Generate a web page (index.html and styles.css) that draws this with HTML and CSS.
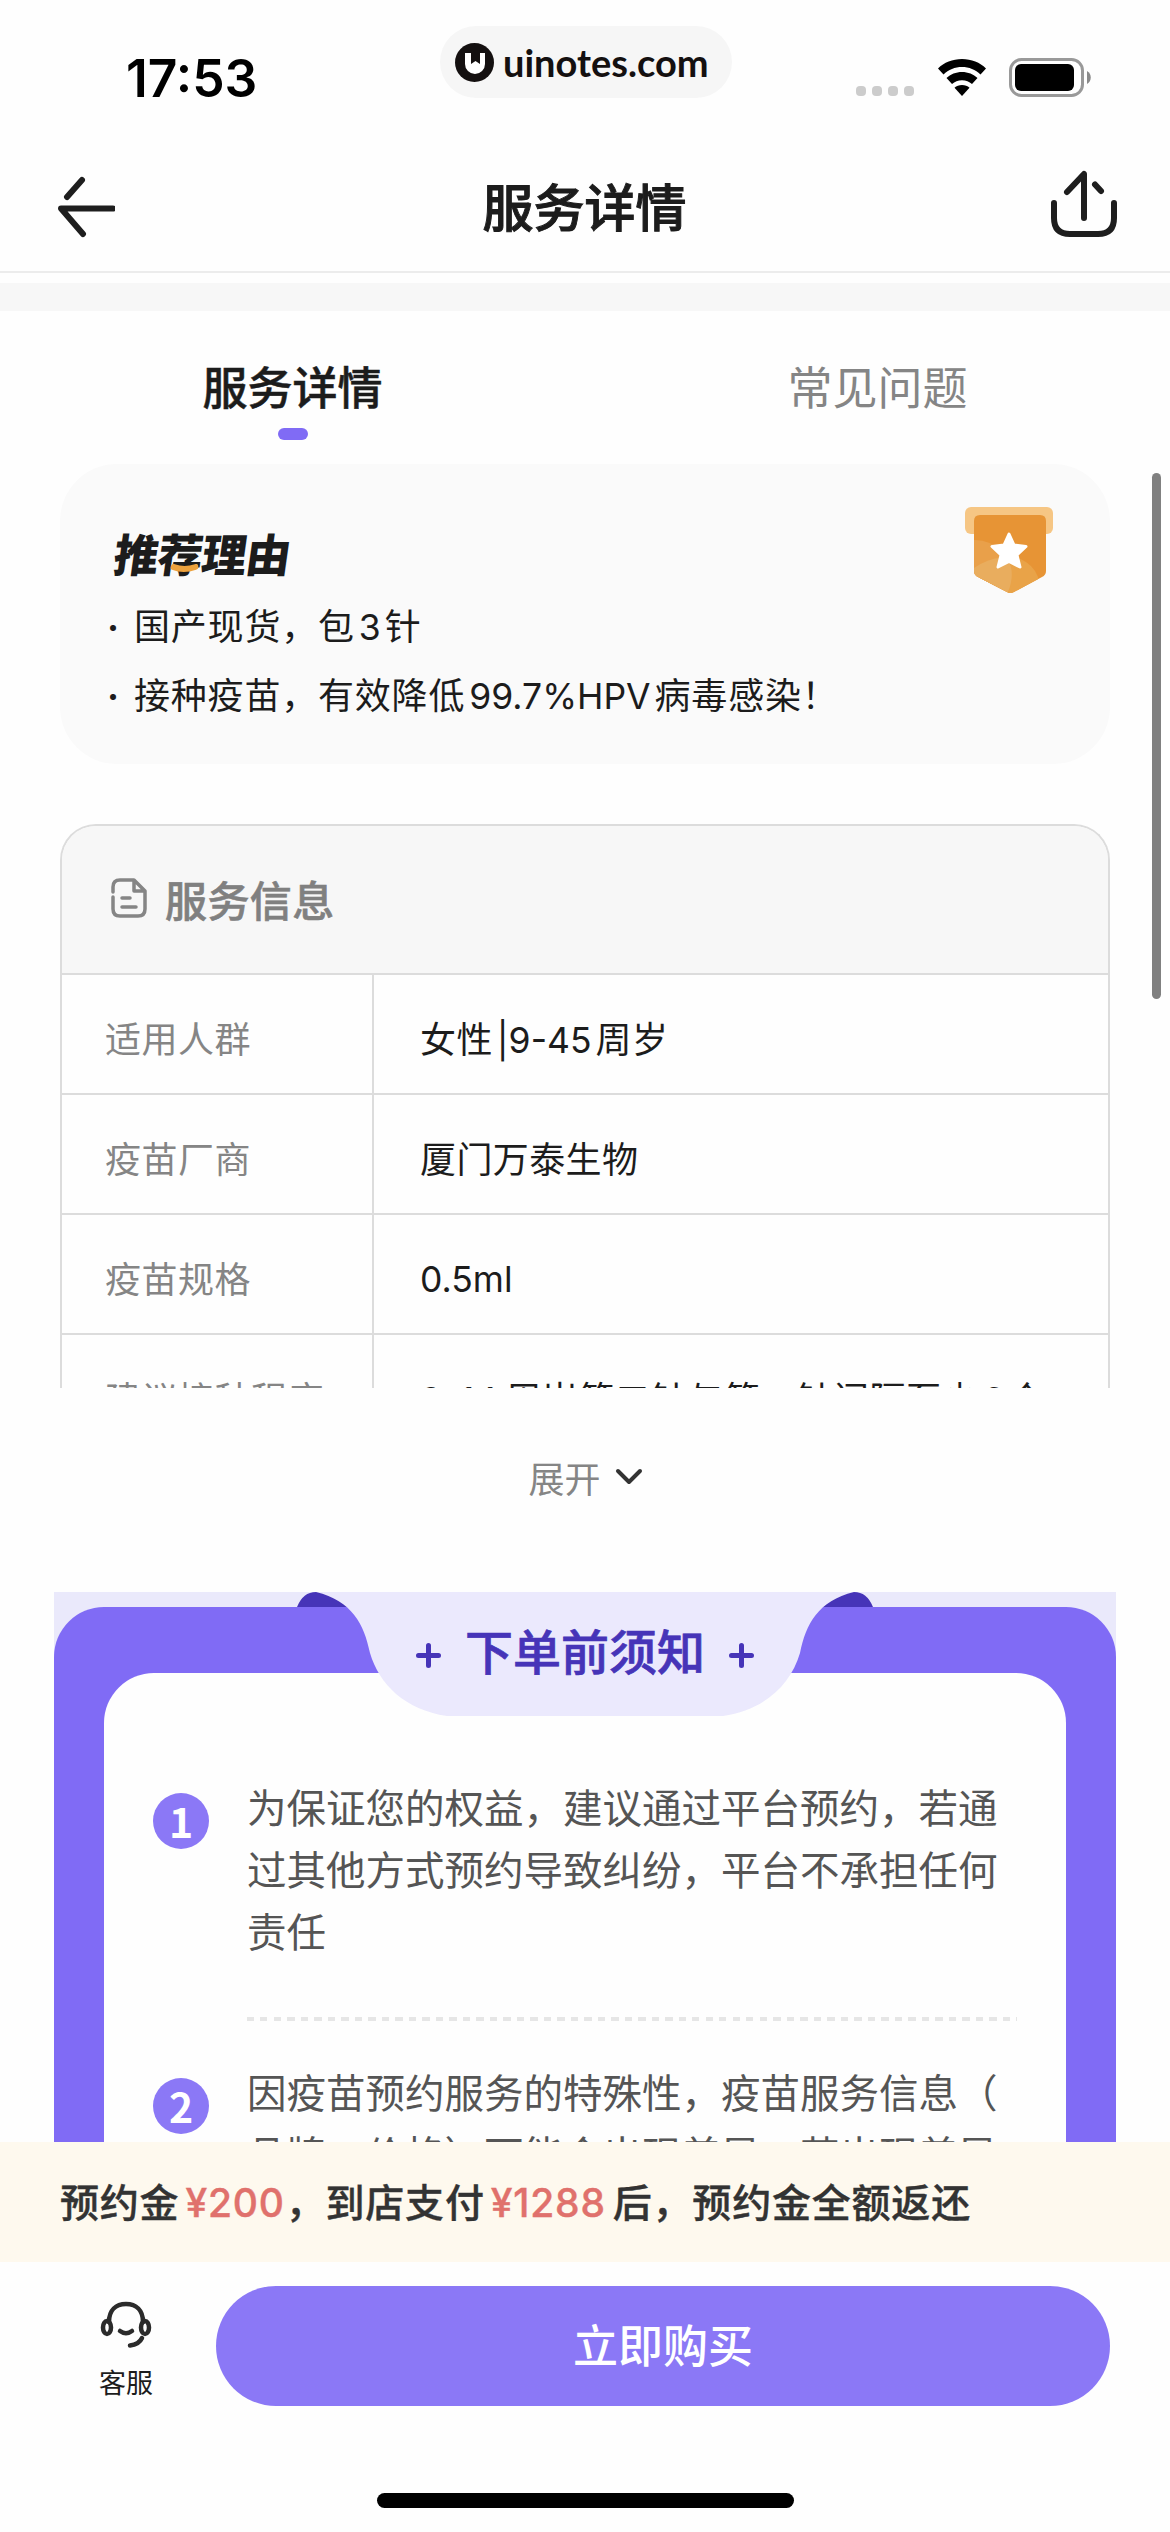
FILE: index.html
```
<!DOCTYPE html>
<html lang="zh-CN">
<head>
    <meta charset="UTF-8">
    <title>服务详情</title>
    <link rel="stylesheet" href="styles.css">
</head>

<body>
<div class="statusbar">
    <span class="time">17:53</span>
    <div class="island">
        <svg width="39" height="39" viewBox="0 0 39 39"><circle cx="19.5" cy="19.5" r="19.5" fill="#141010"/><path d="M10 10h6v11l4.500-3 4.500 3V10h5v11a10 10 0 0 1-20 0z" fill="#fff"/></svg>
        <span>uinotes.com</span>
    </div>
    <div class="signals">
        <div class="dots"><i></i><i></i><i></i><i></i></div>
        <svg class="wifi" width="50" height="38" viewBox="0 0 50 38"><path d="M25 1C15.500 1 7 4.500 1 10.500l5.500 6C11.500 11.500 18 9 25 9s13.500 2.500 18.500 7.500l5.500-6C43 4.500 34.500 1 25 1z"/><path d="M25 14c-6 0-11.500 2.300-15.500 6l5.500 6c2.700-2.400 6-3.800 10-3.800s7.300 1.400 10 3.800l5.500-6c-4-3.700-9.500-6-15.500-6z"/><path d="M25 27c-3 0-5.500 1-7.500 2.800L25 38l7.500-8.200C30.500 28 28 27 25 27z"/></svg>
        <svg class="battery" width="82" height="39" viewBox="0 0 82 39"><rect x="1.500" y="1.500" width="72" height="36" rx="11" fill="none" stroke="#999" stroke-width="3"/><rect x="6" y="6" width="59" height="27" rx="6"/><path d="M78 13c5 2.500 5 10.500 0 13z" fill="#8a8a8a"/></svg>
    </div>
</div>

<div class="navbar">
    <svg width="60" height="64" viewBox="0 0 60 64"><path d="M27 5L12 22M58 33.500H6L28 59" /></svg>
    <h1>服务详情</h1>
    <svg width="70" height="70" viewBox="0 0 70 70"><path d="M4 35v15q0 16 16 16h28q16 0 16-16V35M17 24L34 6v44M45 16.500l6 6.500"/></svg>
</div>
<div class="band"></div>

<main>
    <div class="tabs">
        <div class="tab active">服务详情</div>
        <div class="tab">常见问题</div>
    </div>

    <section class="reason">
        <h2>推<span class="smile">荐<svg width="28" height="9" viewBox="0 0 28 9"><path d="M3 3q11 4 22 0" fill="none" stroke="#eda23e" stroke-width="6" stroke-linecap="round"/></svg></span>理由</h2>
        <p><b>·</b>国产现货，包<i>3</i>针</p>
        <p><b>·</b>接种疫苗，有效降低<i>99.7%HPV</i>病毒感染！</p>
        <svg class="medal" width="90" height="88" viewBox="0 0 90 88">
            <rect x="1" y="1" width="88" height="27" rx="6" fill="#f6c684"/>
            <clipPath id="shield"><path d="M16 9h60q6 0 6 6v50q0 4-4 6L50 86q-3.500 2-7 0L14 71q-4-2-4-6V15q0-6 6-6z"/></clipPath>
            <g clip-path="url(#shield)">
                <rect width="90" height="88" fill="#e79435"/>
                <circle cx="11" cy="72" r="38" fill="#e9a04a"/>
                <circle cx="45" cy="82" r="31" fill="#e9a348"/>
                <path d="M10 62q20-13 34-9 8 16-1 35H10z" fill="#e9ad5e"/>
            </g>
            <path d="M45 28l5 11 12 1.500-9 8.500 3 12-11-5.500L34 61l3-12-9-8.500L40 39z" fill="#fff" stroke="#fff" stroke-width="3" stroke-linejoin="round"/>
        </svg>
    </section>

    <section class="info">
        <div class="info-head">
            <svg width="36" height="40" viewBox="0 0 36 40"><path d="M2 14V9q0-7 7-7h14l11 11v18q0 7-7 7H9q-7 0-7-7V19M23 2v11h11M11 20h8M11 29h14"/></svg>
            <span>服务信息</span>
        </div>
        <div class="row"><div class="key">适用人群</div><div class="val">女性<i>|9-45</i>周岁</div></div>
        <div class="row"><div class="key">疫苗厂商</div><div class="val">厦门万泰生物</div></div>
        <div class="row"><div class="key">疫苗规格</div><div class="val ml">0.5ml</div></div>
        <div class="row"><div class="key">建议接种程序</div><div class="val">9-14<span class="gap"></span>周岁第二针与第一针间隔至少<i>6</i>个</div></div>
    </section>
    <div class="expand">展开<svg width="28" height="18" viewBox="0 0 28 18"><path d="M3 3l11 11L25 3"/></svg></div>

    <section class="notice">
        <svg class="clip" width="576" height="124" viewBox="0 0 576 124">
            <path d="M0 15Q6 0 19 0H50V15zM576 15q-6-15-19-15H526V15z" fill="#4634b8"/>
            <path d="M19 0C55 9 67 32 73 61C82 92 108 118 150 124H426C468 118 494 92 503 61C509 32 521 9 557 0z" fill="#ebe9fd"/>
        </svg>
        <h3>
            <svg width="25" height="25" viewBox="0 0 25 25"><path d="M12.500 2.500v20M2.500 12.500h20"/></svg>
            <span>下单前须知</span>
            <svg width="25" height="25" viewBox="0 0 25 25"><path d="M12.500 2.500v20M2.500 12.500h20"/></svg>
        </h3>
        <div class="frame">
            <div class="paper">
                <div class="item">
                    <span class="num">1</span>
                    <p>为保证您的权益，建议通过平台预约，若通<br>过其他方式预约导致纠纷，平台不承担任何<br>责任</p>
                </div>
                <div class="dash"></div>
                <div class="item">
                    <span class="num">2</span>
                    <p>因疫苗预约服务的特殊性，疫苗服务信息（<br>品牌、价格）可能会出现差异，若出现差异</p>
                </div>
            </div>
        </div>
    </section>
</main>
<div class="scrollbar"></div>

<footer>
    <div class="deposit">预约金<em>¥200</em>，到店支付<em>¥1288</em>后，预约金全额返还</div>
    <div class="actions">
        <div class="service">
            <svg width="52" height="48" viewBox="0 0 52 48"><path d="M9 21C9 9 16 3 26 3s17 6 17 18M20 30q6 4.500 12 0M42 37q-3 6.500-12 7.500"/><ellipse cx="7" cy="26.500" rx="4" ry="6.500"/><ellipse cx="45" cy="26.500" rx="4" ry="6.500"/></svg>
            <span>客服</span>
        </div>
        <div class="buy">立即购买</div>
    </div>
    <div class="home"></div>
</footer>
</body>
</html>
```
FILE: styles.css
```
*{
    box-sizing: border-box;
}
body{
    margin: 0;
    width: 1170px;
    height: 2532px;
    position: relative;
    overflow: hidden;
    display: flex;
    flex-direction: column;
    background-color: #fefefe;
    color: #1c1c1c;
    font-family: Inter, "Noto Sans CJK SC", sans-serif;
}
h1, h2, h3, p{
    margin: 0;
}
i, em{
    font-style: normal;
}
svg{
    display: block;
    flex: none;
}

/* status bar */
.statusbar{
    height: 150px;
    flex: none;
    display: grid;
    grid-template-columns: 440px 292px 1fr;
    align-items: start;
    color: #000;
}
.time{
    padding: 47px 0 0 126px;
    font-size: 51.5px;
    line-height: 62px;
    font-weight: 600;
}
.island{
    height: 72px;
    margin-top: 26px;
    padding-left: 15px;
    display: flex;
    align-items: center;
    gap: 9px;
    border-radius: 36px;
    background-color: #f6f6f6;
    color: #141010;
    font: 700 38px/70px Lato, sans-serif;
}
.signals{
    display: flex;
    padding: 58px 0 0 124px;
}
.dots{
    display: flex;
    gap: 6px;
    padding-top: 28px;
    width: 81px;
}
.dots i{
    width: 10px;
    height: 10px;
    border-radius: 4px;
    background-color: #ccc;
}
.wifi{
    margin-right: 22px;
}

/* title bar */
.navbar{
    height: 123px;
    flex: none;
    padding: 0 50px 0 55px;
    display: flex;
    justify-content: space-between;
    align-items: flex-start;
    border-bottom: 2px solid #ececec;
}
.navbar svg{
    fill: none;
    stroke: #1e1e1e;
    stroke-width: 6;
    stroke-linecap: round;
    stroke-linejoin: round;
    margin-top: 25px;
}
.navbar svg:last-child{
    margin-top: 18px;
}
.navbar h1{
    font-size: 51px;
    line-height: 76px;
    font-weight: 500;
    -webkit-text-stroke: 1px;
    margin: 21px 0 0 4px;
}
.band{
    flex: none;
    height: 28px;
    margin-top: 10px;
    background-color: #f7f7f7;
}

main{
    flex: 1;
    min-height: 0;
    overflow: hidden;
}
.tabs{
    display: flex;
    height: 153px;
}
.tab{
    flex: 1;
    display: flex;
    flex-direction: column;
    align-items: center;
    padding-top: 45px;
    font-size: 45px;
    line-height: 66px;
    color: #858585;
}
.active{
    color: #1c1c1c;
    font-weight: 500;
    -webkit-text-stroke: .5px;
}
.active::after{
    content: "";
    width: 30px;
    height: 12px;
    margin-top: 6px;
    border-radius: 6px;
    background-color: #806bf5;
}

.reason{
    position: relative;
    height: 300px;
    margin: 0 60px;
    padding: 59px 46px 0;
    border-radius: 57px;
    background-color: #fafafa;
}
.reason h2{
    font-size: 45px;
    line-height: 66px;
    font-weight: 900;
    letter-spacing: -1px;
    padding-left: 8px;
    margin-bottom: 4px;
    transform: skewX(-8deg);
}
.smile{
    position: relative;
}
.smile svg{
    position: absolute;
    left: 14px;
    top: 36px;
}
.reason p{
    font-size: 36px;
    line-height: 69px;
    letter-spacing: .8px;
}
.reason p b{
    display: inline-block;
    width: 28px;
    padding-left: 1px;
}
.reason p i, .val i{
    margin: 0 4px;
    letter-spacing: 0;
    font-size: 35.5px;
}
.medal{
    position: absolute;
    right: 56px;
    top: 42px;
}

/* service table, cut off until expanded */
.info{
    height: 564px;
    margin: 60px 60px 0;
    overflow: hidden;
    border: 2px solid #dcdcdc;
    border-bottom: 0;
    border-radius: 36px 36px 0 0;
}
.info-head{
    display: flex;
    align-items: center;
    gap: 18px;
    height: 147px;
    padding: 0 0 3px 49px;
    background-color: #f7f7f7;
    color: #808080;
    font-size: 42px;
    font-weight: 500;
    letter-spacing: .4px;
    -webkit-text-stroke: .6px;
}
.info-head svg{
    fill: none;
    stroke: #858585;
    stroke-width: 3.5;
    stroke-linecap: round;
    stroke-linejoin: round;
}
.row{
    display: flex;
    height: 120px;
    border-top: 2px solid #dcdcdc;
    font-size: 36px;
    line-height: 130px;
    white-space: nowrap;
}
.key{
    width: 312px;
    padding-left: 43px;
    border-right: 2px solid #dcdcdc;
    color: #858585;
    letter-spacing: .5px;
}
.val{
    padding-left: 46px;
    letter-spacing: .4px;
}
.ml{
    font-size: 35.5px;
    letter-spacing: 0;
}
.gap{
    display: inline-block;
    width: 7px;
}
.expand{
    display: flex;
    justify-content: center;
    align-items: center;
    gap: 14px;
    height: 180px;
    padding: 0 0 3px 1px;
    color: #858585;
    font-size: 36px;
}
.expand svg{
    fill: none;
    stroke: #333;
    stroke-width: 4;
    stroke-linecap: round;
    stroke-linejoin: round;
}

/* notice board */
.notice{
    position: relative;
    margin: 24px 54px 0;
    padding-top: 15px;
    background-color: #eae9fb;
}
.clip{
    position: absolute;
    left: 243px;
    top: 0;
}
.notice h3{
    position: absolute;
    left: 0;
    right: 0;
    top: 25px;
    display: flex;
    justify-content: center;
    align-items: center;
    gap: 24px;
    font-size: 48px;
    line-height: 72px;
    font-weight: 500;
    -webkit-text-stroke: .7px;
    color: #4634b8;
}
.notice h3 svg{
    fill: none;
    stroke: #4634b8;
    stroke-width: 5;
    stroke-linecap: round;
    margin-top: 4px;
}
.frame{
    padding: 66px 50px 0;
    border-radius: 50px 50px 0 0;
    background-color: #806bf5;
}
.paper{
    height: 500px;
    padding: 105px 49px 0;
    border-radius: 50px 50px 0 0;
    background-color: #fefefe;
}
.item{
    display: flex;
    gap: 38px;
    color: #555;
    font-size: 39.5px;
    line-height: 62px;
    white-space: nowrap;
}
.num{
    width: 56px;
    height: 56px;
    margin-top: 15px;
    border-radius: 50%;
    background-color: #8b78f6;
    color: #fff;
    text-align: center;
    font: 700 41px/55px "Noto Sans CJK SC", sans-serif;
}
.dash{
    height: 4px;
    width: 770px;
    margin: 53px 0 42px 94px;
    background: repeating-linear-gradient(90deg, #e6e6e6 0 7px, transparent 7px 13.5px);
}
.scrollbar{
    position: absolute;
    left: 1152px;
    top: 473px;
    width: 9px;
    height: 526px;
    border-radius: 5px;
    background-color: #808080;
}

/* bottom bar */
footer{
    flex: none;
    height: 390px;
    background-color: #fefefe;
}
.deposit{
    height: 120px;
    padding-left: 60px;
    line-height: 121px;
    font-size: 39px;
    font-weight: 500;
    letter-spacing: .8px;
    white-space: nowrap;
    color: #333;
    background-color: #fef9ee;
    -webkit-text-stroke: .4px;
}
.deposit em{
    color: #e0716c;
    margin: 0 1px 0 6px;
}
.deposit em:last-child{
    margin-right: 7px;
}
.actions{
    display: flex;
    padding: 24px 60px 0 0;
}
.service{
    width: 216px;
    padding: 15px 0 0 36px;
    display: flex;
    flex-direction: column;
    align-items: center;
    gap: 14px;
    font-size: 27px;
    line-height: 41px;
}
.service svg{
    fill: none;
    stroke: #2b2b2b;
    stroke-width: 4.5;
    stroke-linecap: round;
}
.buy{
    flex: 1;
    height: 120px;
    border-radius: 60px;
    background-color: #8b78f6;
    color: #fff;
    text-align: center;
    font-size: 45px;
    line-height: 121px;
    font-weight: 500;
}
.home{
    width: 417px;
    height: 15px;
    margin: 87px auto 0;
    border-radius: 8px;
    background-color: #000;
}
```
